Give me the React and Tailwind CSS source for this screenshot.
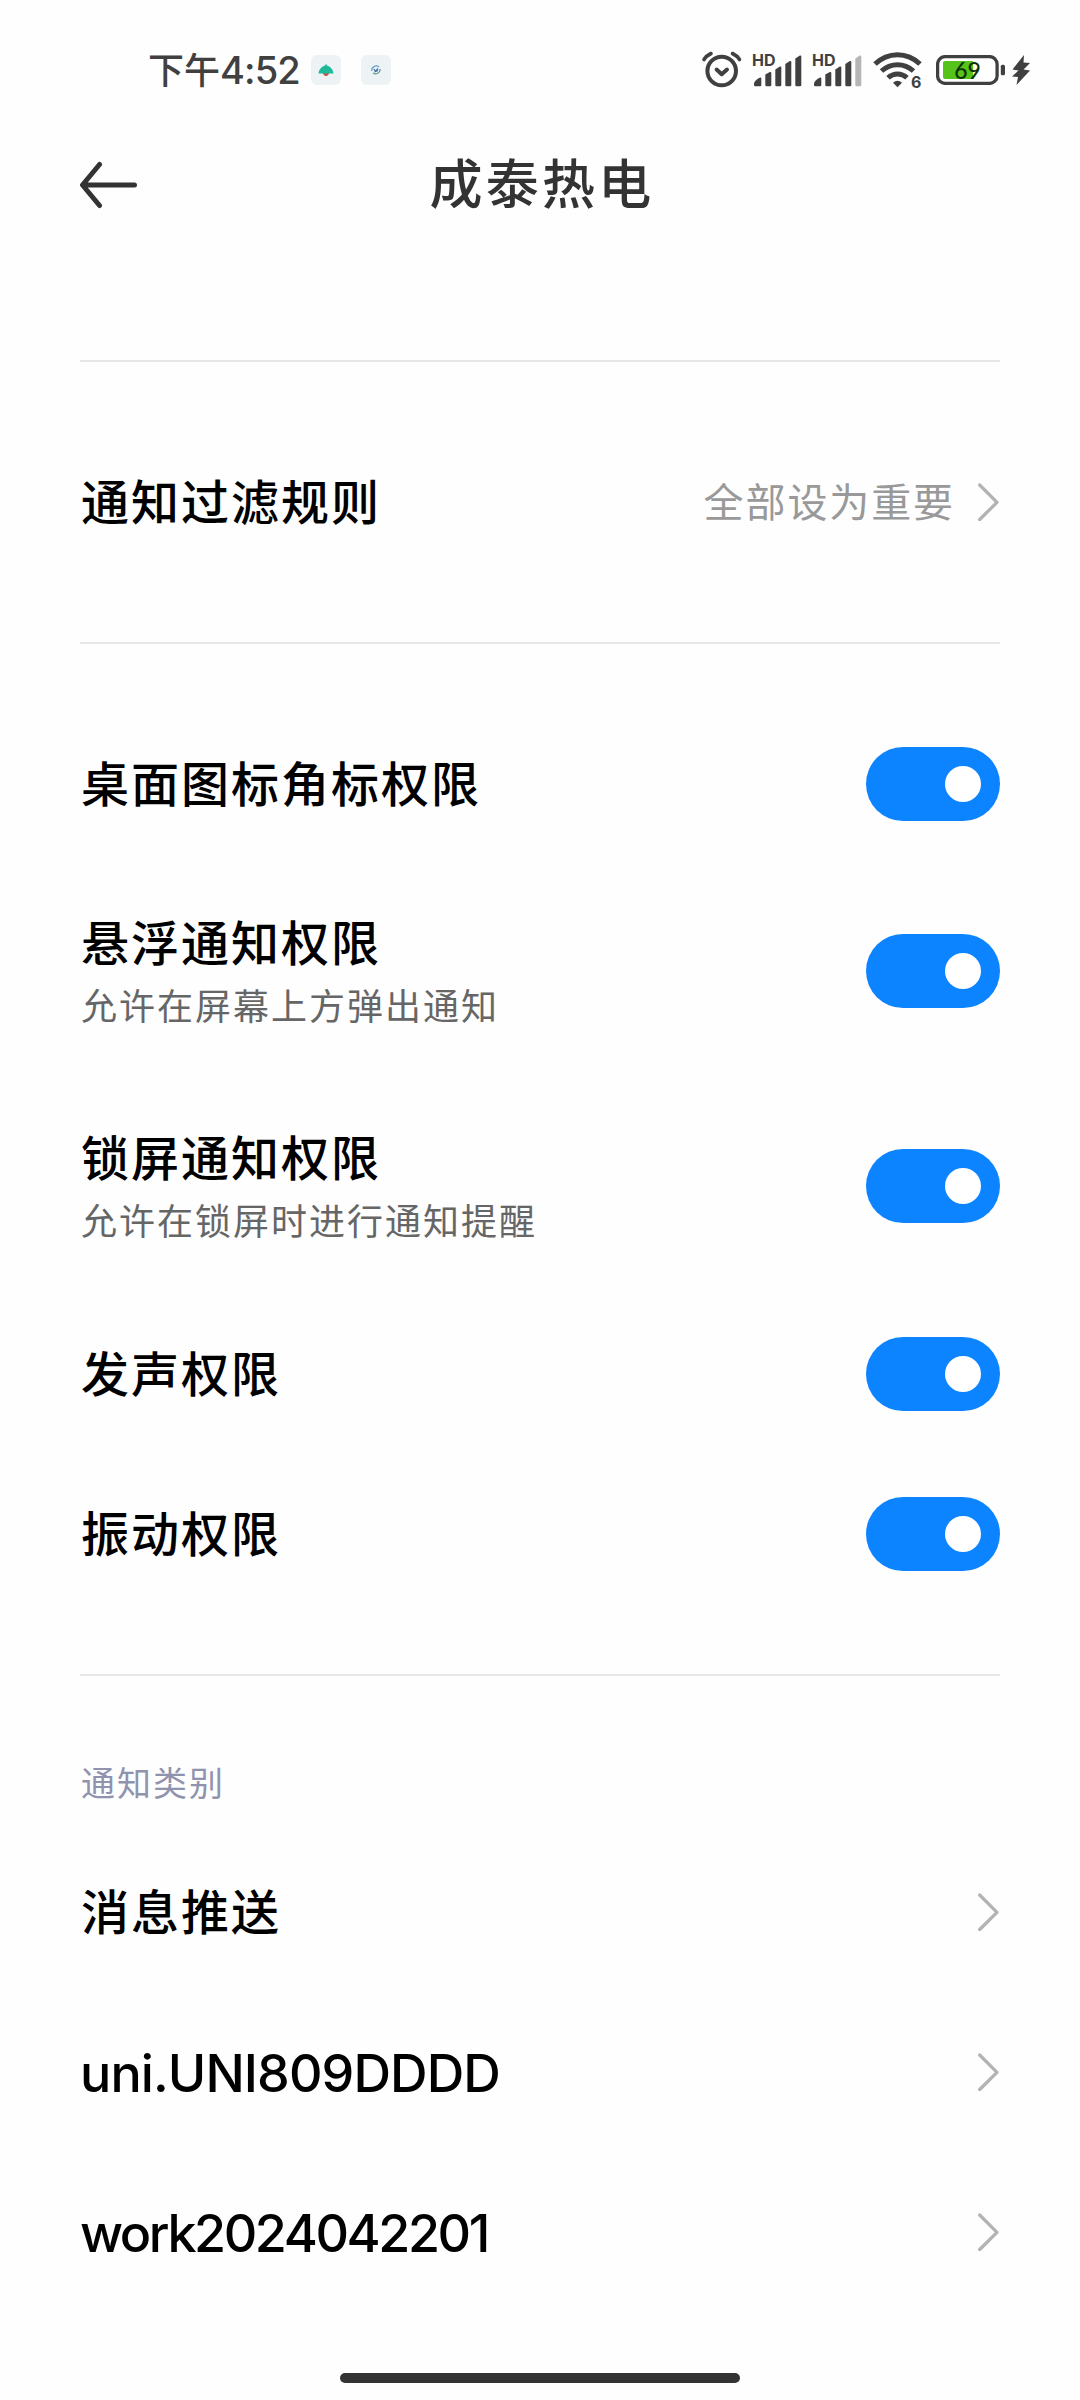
const permissions = [
  { title: '桌面图标角标权限' },
  { title: '悬浮通知权限', desc: '允许在屏幕上方弹出通知' },
  { title: '锁屏通知权限', desc: '允许在锁屏时进行通知提醒' },
  { title: '发声权限' },
  { title: '振动权限' },
];

const categories = [
  { title: '消息推送' },
  { title: 'uni.UNI809DDDD', latin: 'tracking-[-0.9px]' },
  { title: 'work2024042201', latin: 'tracking-[-2.4px]' },
];

function AlarmIcon() {
  return (
    <svg width="42" height="40" viewBox="0 0 42 40" fill="none" stroke="#404040" strokeWidth="4" strokeLinecap="round">
      <circle cx="20.7" cy="21" r="14.3" />
      <path d="M15.6 19.5l5.1 4.7 5.3-4.7" strokeLinejoin="round" />
      <path d="M3 9.5c1.700-2.600 4-4.600 7-6" strokeWidth="3.600" />
      <path d="M31.500 3.500c3 1.400 5.300 3.400 7 6" strokeWidth="3.600" />
    </svg>
  );
}

function Signal({ lastColor }) {
  return (
    <svg className="overflow-visible" width="52" height="36" viewBox="0 0 52 36" fill="#404040">
      <text x="0" y="13.500" fontSize="16" fontWeight="700" className="font-['Inter',sans-serif]">HD</text>
      <path d="M2 32q0-3.500 6-6.500q1.300-.5 1.300 1v6.500q0 1.200-1.200 1.200H3.200Q2 34.200 2 33z" />
      <path d="M13.300 22.500l4.500-2.500q1.500-.5 1.500 1v12q0 1.200-1.200 1.200h-3.600q-1.200 0-1.200-1.200z" />
      <path d="M23.300 17.500l4.500-3q1.500-.5 1.500 1V33q0 1.200-1.200 1.200h-3.600q-1.200 0-1.200-1.200z" />
      <path d="M33.300 12l4.500-3q1.500-.5 1.500 1v23q0 1.200-1.200 1.200h-3.600q-1.200 0-1.200-1.200z" />
      <path d="M43.300 6.500l4.500-3q1.500-.5 1.500 1V33q0 1.200-1.200 1.200h-3.600q-1.200 0-1.200-1.200z" fill={lastColor} />
    </svg>
  );
}

function WifiIcon() {
  return (
    <svg className="overflow-visible" width="50" height="38" viewBox="0 0 50 38" fill="none" stroke="#404040" strokeWidth="5">
      <path d="M2 13C15 .5 34 .5 47 13" />
      <path d="M8.500 20c9.200-8.500 22.800-8.500 32 0" />
      <path d="M15 26.800c5.500-5.200 13.500-5.200 19 0" />
      <path d="M20 31.700q4.500-3.800 9 0l-4.500 4.500z" fill="#404040" stroke="none" />
      <text x="38" y="36.500" fontSize="16" fontWeight="700" fill="#404040" stroke="none" className="font-['Inter',sans-serif]">6</text>
    </svg>
  );
}

function BatteryIcon() {
  return (
    <svg width="70" height="30" viewBox="0 0 70 30">
      <rect x="1.600" y="1.600" width="59.500" height="26.800" rx="7.500" fill="#fff" stroke="#404040" strokeWidth="3.300" />
      <path d="M9 6h28v18H9q-2 0-2-2V8q0-2 2-2z" fill="#55c31a" />
      <text x="31.500" y="23.500" fontSize="23" fontWeight="500" textAnchor="middle" fill="#0d3000" className="font-['Lato',sans-serif]">69</text>
      <rect x="64.800" y="9.700" width="4.200" height="10.500" rx="1.500" fill="#404040" />
    </svg>
  );
}

function StatusBar() {
  return (
    <div className="flex h-[140px] items-center pr-[49px] pl-[148px]">
      <span className="flex items-center text-[36px] leading-none text-[#404040]">
        <span className="pb-1 font-medium">下午</span>
        <span className="font-['Inter',sans-serif] text-[38px] font-medium tracking-[-0.9px]">4:52</span>
      </span>
      <div className="ml-auto flex items-center">
        <div className="mr-5 flex size-[30px] items-center justify-center rounded-md bg-[#edf2f5]">
          <svg width="16" height="14" viewBox="0 0 16 14">
            <path d="M5 10h6q-.5 3-3 3t-3-3z" fill="#c5534a" />
            <path d="M.5 10.500C1 6 4 3.500 7 2.500Q8 0 9 2.500c3 1 6 3.500 6.500 8z" fill="#1cb99a" />
          </svg>
        </div>
        <div className="mr-[310px] flex size-[30px] items-center justify-center rounded-md bg-[#edf2f5]">
          <svg width="10" height="10" viewBox="0 0 10 10" fill="none" strokeWidth="1.300">
            <path d="M1 6C0 2 5-.5 8 2" stroke="#6b9fc9" />
            <path d="M9 4c.5 4-4 6-7 4" stroke="#5ba08a" />
            <path d="M3 4l1.500 2.500L7 3.500M3.500 7L7 5.500" stroke="#4570a8" />
          </svg>
        </div>
        <AlarmIcon />
        <div className="ml-[9px] flex gap-2">
          <Signal lastColor="#404040" />
          <Signal lastColor="#b5b5b5" />
        </div>
        <div className="ml-[9px]"><WifiIcon /></div>
        <div className="ml-[13px]"><BatteryIcon /></div>
        <svg className="ml-[5px]" width="20" height="32" viewBox="0 0 20 32" fill="#404040">
          <path d="M13 1L1.500 15.500l6 1L1 22.500l6 .5L5.500 31 19 16.500l-6.500-1L19 9l-6.500-.5z" />
        </svg>
      </div>
    </div>
  );
}

function Chevron() {
  return (
    <svg width="22" height="38" viewBox="0 0 22 38" fill="none" stroke="#b3b3b3" strokeWidth="3.300" strokeLinecap="round" strokeLinejoin="round">
      <path d="M1.700 2L19 19.300 1.700 36.500" />
    </svg>
  );
}

function Toggle() {
  return (
    <button role="switch" aria-checked="true" className="flex h-[74px] w-[134px] items-center justify-end rounded-full bg-[#0d84ff] pr-[19px]">
      <span className="size-9 rounded-full bg-white" />
    </button>
  );
}

function Divider() {
  return <div className="h-0.5 bg-[#e6e6e6]" />;
}

export default function App() {
  return (
    <div className="flex h-[2400px] w-[1080px] flex-col bg-[#fefefe] font-['Noto_Sans_CJK_SC',sans-serif] text-black">
      <StatusBar />
      <header className="grid h-[89px] grid-cols-[1fr_auto_1fr] items-center px-20">
        <svg width="58" height="50" viewBox="0 0 58 50" fill="none" stroke="#333" strokeWidth="5" strokeLinecap="round" strokeLinejoin="round">
          <path d="M19.500 4.500L2.500 25l17 20.500M3 25h51.500" />
        </svg>
        <h1 className="pb-1.5 pl-1 text-[53px] leading-none font-medium tracking-[3.200px] text-[#333]">成泰热电</h1>
      </header>

      <main className="mt-[131px] px-20">
        <Divider />
        <div className="my-[60px] flex h-40 items-center">
          <span className="pb-1.5 pl-px text-[48px] font-medium tracking-[2px]">通知过滤规则</span>
          <span className="mr-[23px] ml-auto pb-1 text-[40px] tracking-[1.900px] text-[#999]">全部设为重要</span>
          <Chevron />
        </div>
        <Divider />

        <div className="my-[60px]">
          {permissions.map((p) => (
            <div key={p.title} className={`flex items-center justify-between ${p.desc ? 'h-[215px] pb-px' : 'h-40'}`}>
              <div className={p.desc ? 'pl-px' : 'pb-1.5 pl-px'}>
                <p className="text-[48px] leading-[64px] font-medium tracking-[2px]">{p.title}</p>
                {p.desc && <p className="pt-0.5 text-[36px] leading-[60px] tracking-[2px] text-[#666]">{p.desc}</p>}
              </div>
              <Toggle />
            </div>
          ))}
        </div>
        <Divider />

        <h2 className="mt-[76px] mb-[20px] pl-px text-[34px] leading-[60px] tracking-[2px] text-[#8f93ad]">通知类别</h2>
        {categories.map((c) => (
          <div key={c.title} className="flex h-40 items-center justify-between">
            {c.latin ? (
              <span className={`pt-[3px] font-['Inter',sans-serif] text-[52px] font-medium ${c.latin}`}>{c.title}</span>
            ) : (
              <span className="pb-1.5 pl-px text-[48px] font-medium tracking-[2px]">{c.title}</span>
            )}
            <Chevron />
          </div>
        ))}
      </main>

      <div className="mx-auto mt-auto mb-[17px] h-2.5 w-[400px] rounded-full bg-[#333]" />
    </div>
  );
}
